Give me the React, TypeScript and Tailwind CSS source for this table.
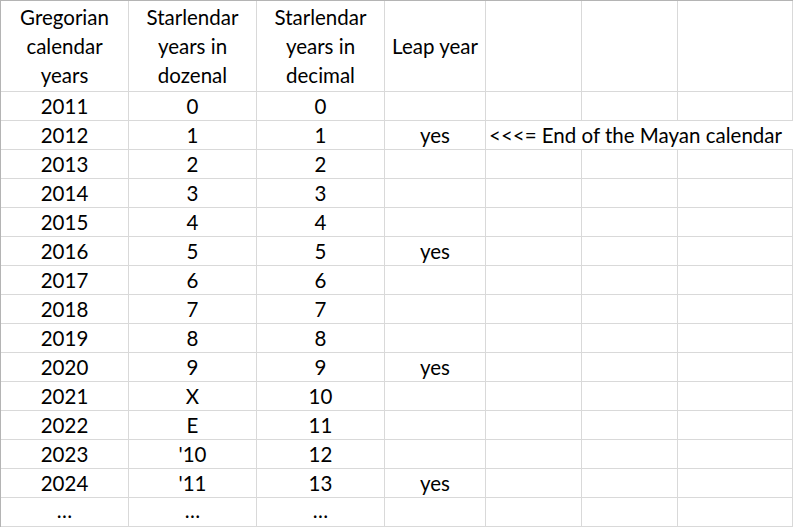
const rows: [string, string, string, string][] = [
  ['2011', '0', '0', ''],
  ['2012', '1', '1', 'yes'],
  ['2013', '2', '2', ''],
  ['2014', '3', '3', ''],
  ['2015', '4', '4', ''],
  ['2016', '5', '5', 'yes'],
  ['2017', '6', '6', ''],
  ['2018', '7', '7', ''],
  ['2019', '8', '8', ''],
  ['2020', '9', '9', 'yes'],
  ['2021', 'X', '10', ''],
  ['2022', 'E', '11', ''],
  ['2023', "'10", '12', ''],
  ['2024', "'11", '13', 'yes'],
];

const cell = 'border-r border-b border-[#d9d9d9] flex items-center justify-center';

export default function App() {
  return (
    <div
      className="w-[793px] h-[527px] overflow-hidden bg-white text-black text-[20.5px] border-t border-l border-[#b4b4b4]"
      style={{ fontFamily: 'Lato, "Open Sans", sans-serif' }}
    >
      <div className="grid grid-cols-[128px_128px_128px_101px_96px_96px_1fr] grid-rows-[91px] auto-rows-[29px]">
        <div className={`${cell} text-center leading-[29px]`}>
          Gregorian
          <br />
          calendar
          <br />
          years
        </div>
        <div className={`${cell} text-center leading-[29px]`}>
          Starlendar
          <br />
          years in
          <br />
          dozenal
        </div>
        <div className={`${cell} text-center leading-[29px]`}>
          Starlendar
          <br />
          years in
          <br />
          decimal
        </div>
        <div className={cell}>Leap year</div>
        <div className={cell} />
        <div className={cell} />
        <div className={cell} />

        {rows.map(([g, dz, dc, leap]) => (
          <Row key={g} g={g} dz={dz} dc={dc} leap={leap} note={g === '2012'} />
        ))}

        <div className={`${cell} !items-end`}>…</div>
        <div className={`${cell} !items-end`}>…</div>
        <div className={`${cell} !items-end`}>…</div>
        <div className={cell} />
        <div className={cell} />
        <div className={cell} />
        <div className={cell} />
      </div>
    </div>
  );
}

function Row({ g, dz, dc, leap, note }: { g: string; dz: string; dc: string; leap: string; note: boolean }) {
  return (
    <>
      <div className={cell}>{g}</div>
      <div className={cell}>{dz}</div>
      <div className={cell}>{dc}</div>
      <div className={cell}>{leap}</div>
      {note ? (
        <div className="col-span-3 border-b border-[#d9d9d9] flex items-center pl-[3px] whitespace-nowrap">
          &lt;&lt;&lt;= End of the Mayan calendar
        </div>
      ) : (
        <>
          <div className={cell} />
          <div className={cell} />
          <div className={cell} />
        </>
      )}
    </>
  );
}
